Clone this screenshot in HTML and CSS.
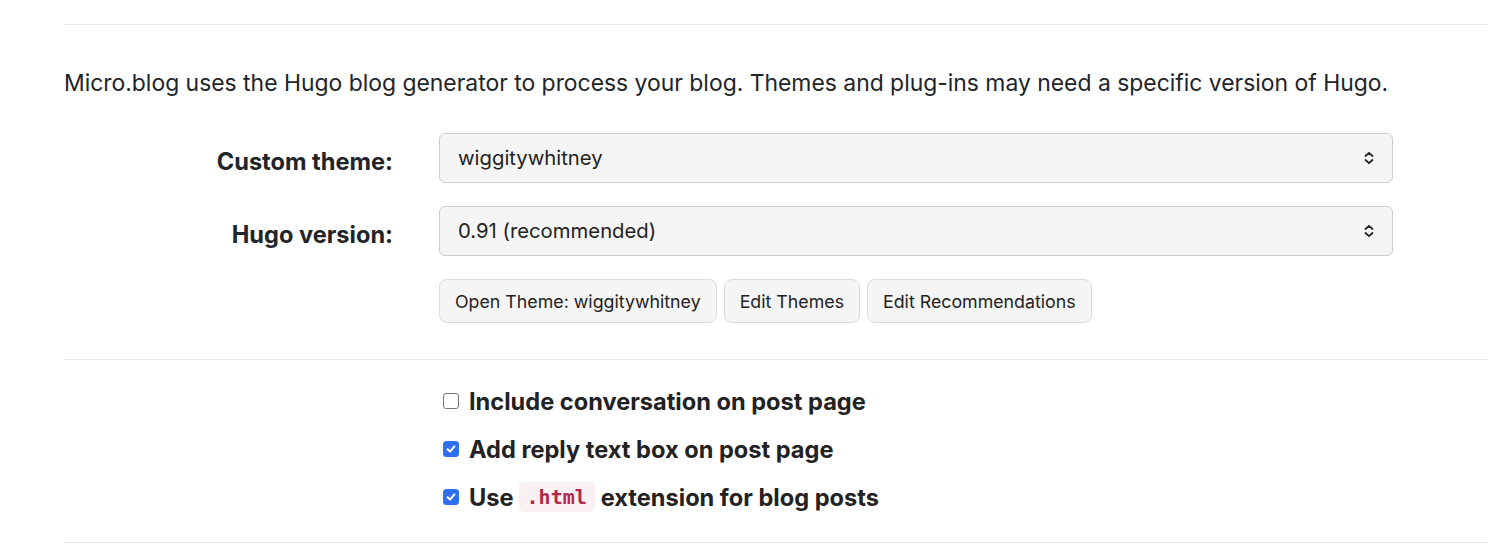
FILE: index.html
```html
<!DOCTYPE html>
<html>
<head>
<meta charset="utf-8">
<link rel="stylesheet" href="styles.css">
</head>
<body>
<div class="page">
  <hr class="rule rule-top">
  <p class="intro">Micro.blog uses the Hugo blog generator to process your blog. Themes and plug-ins may need a specific version of Hugo.</p>
  <div class="form">
    <div class="row">
      <div class="label">Custom theme:</div>
      <div class="select"><span>wiggitywhitney</span>
        <svg class="arrows" width="10" height="14" viewBox="0 0 10 14"><path d="M1.5 5 L5 1.8 L8.5 5 M1.5 9 L5 12.2 L8.5 9" fill="none" stroke="#222" stroke-width="1.8" stroke-linecap="round" stroke-linejoin="round"/></svg>
      </div>
    </div>
    <div class="row">
      <div class="label">Hugo version:</div>
      <div class="select"><span>0.91 (recommended)</span>
        <svg class="arrows" width="10" height="14" viewBox="0 0 10 14"><path d="M1.5 5 L5 1.8 L8.5 5 M1.5 9 L5 12.2 L8.5 9" fill="none" stroke="#222" stroke-width="1.8" stroke-linecap="round" stroke-linejoin="round"/></svg>
      </div>
    </div>
    <div class="row">
      <div class="label"></div>
      <div class="buttons">
        <button class="btn">Open Theme: wiggitywhitney</button>
        <button class="btn">Edit Themes</button>
        <button class="btn">Edit Recommendations</button>
      </div>
    </div>
  </div>
  <hr class="rule rule-mid">
  <div class="checks">
    <label class="check"><span class="box"></span>Include conversation on post page</label>
    <label class="check"><span class="box on"><svg width="12" height="12" viewBox="0 0 12 12"><path d="M2.6 6.2 L5 8.6 L9.4 3.4" fill="none" stroke="#fff" stroke-width="2" stroke-linecap="round" stroke-linejoin="round"/></svg></span>Add reply text box on post page</label>
    <label class="check"><span class="box on"><svg width="12" height="12" viewBox="0 0 12 12"><path d="M2.6 6.2 L5 8.6 L9.4 3.4" fill="none" stroke="#fff" stroke-width="2" stroke-linecap="round" stroke-linejoin="round"/></svg></span>Use <code class="code">.html</code> extension for blog posts</label>
  </div>
  <hr class="rule rule-bottom">
</div>
</body>
</html>
```
FILE: styles.css
```css
html, body {
  margin: 0;
  padding: 0;
  background: #fff;
}
body {
  font-family: Inter, "Liberation Sans", Arial, sans-serif;
  color: #212529;
}
.page {
  padding-left: 64px;
}
.rule {
  border: 0;
  border-top: 1px solid #e9e9e9;
  margin: 0;
  height: 0;
}
.rule-top {
  margin-top: 24px;
}
.intro {
  margin: 44px 0 0 0;
  font-size: 22.9px;
  line-height: 28px;
  white-space: nowrap;
}
.form {
  margin-top: 36px;
  display: flex;
  flex-direction: column;
  gap: 23px;
}
.row {
  display: flex;
  align-items: center;
}
.label {
  width: 329px;
  text-align: right;
  font-weight: bold;
  font-size: 23.6px;
  padding-top: 6px;
  margin-right: 46px;
}
.select {
  width: 952px;
  height: 48px;
  box-sizing: content-box;
  border: 1px solid #cdcdcd;
  border-radius: 6px;
  background: #f5f5f5;
  display: flex;
  align-items: center;
  justify-content: space-between;
  font-size: 20.3px;
  color: #222;
}
.select span {
  padding-left: 18px;
  padding-bottom: 2px;
}
.arrows {
  margin-right: 18px;
}
.buttons {
  display: flex;
  gap: 7px;
}
.btn {
  font-family: Inter, "Liberation Sans", Arial, sans-serif;
  font-size: 17.8px;
  color: #222;
  background: #f5f5f5;
  border: 1px solid #dcdcdc;
  border-radius: 8px;
  height: 44px;
  padding: 0 15px;
}
.rule-mid {
  margin-top: 36px;
}
.checks {
  padding-left: 379px;
  padding-top: 25px;
  display: flex;
  flex-direction: column;
  gap: 16px;
}
.check {
  display: flex;
  align-items: center;
  height: 32px;
  font-weight: bold;
  font-size: 23.6px;
  color: #222;
}
.box {
  width: 14px;
  height: 14px;
  border: 1px solid #767676;
  border-radius: 3px;
  margin-right: 10px;
  display: flex;
  align-items: center;
  justify-content: center;
  background: #fff;
}
.box.on {
  background: #2f6fee;
  border-color: #2f6fee;
}
.code {
  font-family: "DejaVu Sans Mono", "Liberation Mono", monospace;
  font-weight: bold;
  font-size: 20px;
  color: #b0294a;
  background: #f9f0f2;
  border-radius: 5px;
  padding: 3px 8px;
  margin: 0 6px 0 5px;
}
.rule-bottom {
  margin-top: 29px;
}
```
